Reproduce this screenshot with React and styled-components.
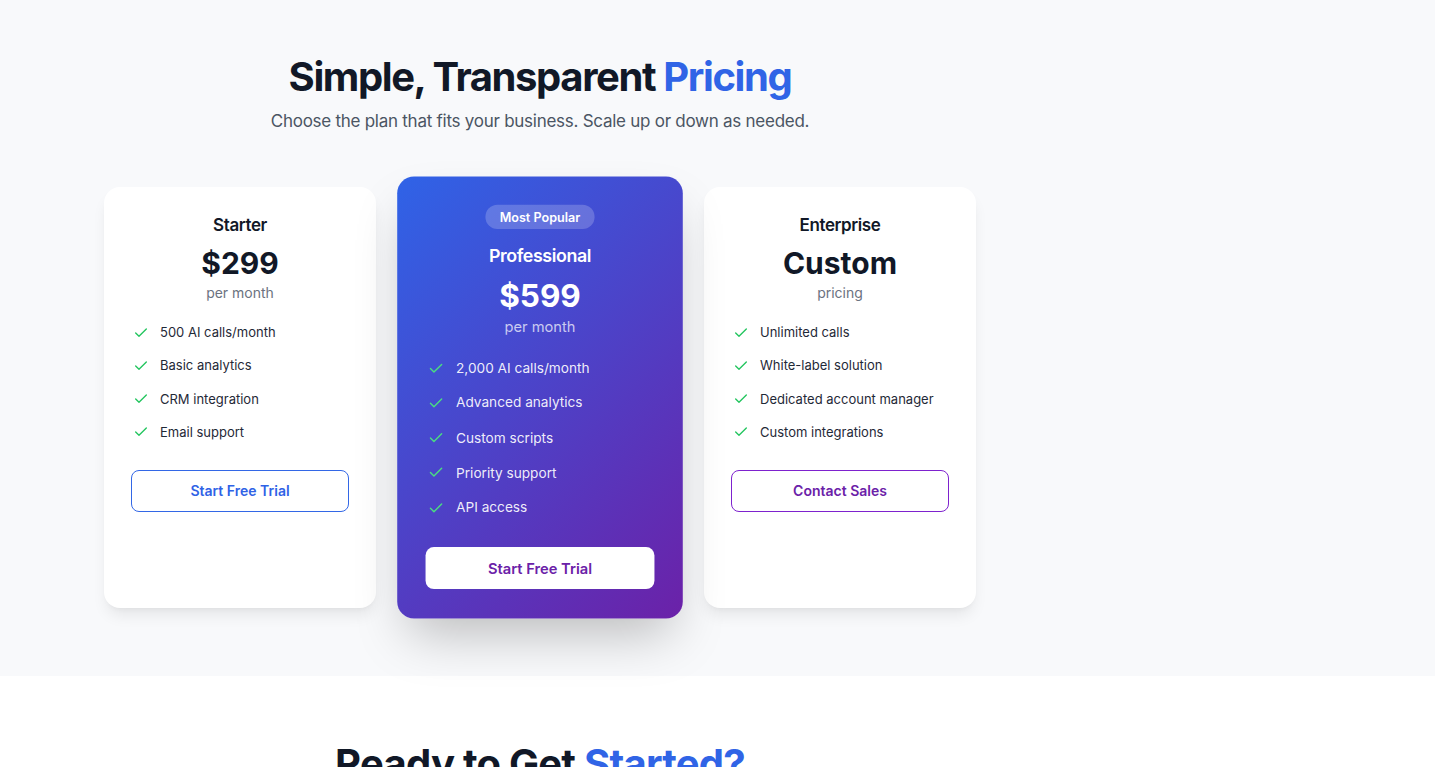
import React from "react";
import styled, { createGlobalStyle } from "styled-components";

const Global = createGlobalStyle`
  html, body { margin: 0; padding: 0; }
  body {
    font-family: Inter, "Noto Sans", "Liberation Sans", sans-serif;
    background: #ffffff;
    color: #111827;
    -webkit-font-smoothing: antialiased;
  }
  * { box-sizing: border-box; }
`;

const Page = styled.div`
  width: 100%;
`;

const PricingSection = styled.section`
  background: #f8f9fb;
  padding: 53px 0 68px;
`;

const Container = styled.div`
  width: 1080px;
  padding: 0 24px;
`;

const Header = styled.div`
  text-align: center;
  margin-bottom: 53px;
`;

const Title = styled.h2`
  margin: 0;
  font-size: 40px;
  line-height: 48px;
  font-weight: 700;
  letter-spacing: ${(p) => (p.$tight ? "-1.4px" : "-0.75px")};
  color: #111827;
`;

const Accent = styled.span`
  color: #3064e6;
`;

const Subtitle = styled.p`
  margin: 7px 0 0;
  font-size: 17px;
  line-height: 26px;
  letter-spacing: -0.26px;
  color: #4b5563;
`;

const Grid = styled.div`
  display: grid;
  grid-template-columns: repeat(3, 272px);
  column-gap: 28px;
  justify-content: center;
  align-items: stretch;
`;

const Card = styled.div`
  display: flex;
  flex-direction: column;
  align-items: center;
  padding: 24px 27px 28px;
  border-radius: 16px;
  background: ${(p) =>
    p.$featured ? "linear-gradient(135deg, #2f63e7 0%, #6b21a8 100%)" : "#ffffff"};
  color: ${(p) => (p.$featured ? "#ffffff" : "#111827")};
  box-shadow: ${(p) =>
    p.$featured
      ? "0 25px 50px -12px rgba(0,0,0,0.25)"
      : "0 10px 15px -3px rgba(0,0,0,0.08), 0 4px 6px -4px rgba(0,0,0,0.06)"};
  transform: ${(p) => (p.$featured ? "scale(1.05)" : "none")};
`;

const Badge = styled.span`
  display: inline-block;
  padding: 4px 14px;
  margin: 3px 0 11px;
  border-radius: 999px;
  background: rgba(255, 255, 255, 0.2);
  font-size: 12px;
  line-height: 15px;
  font-weight: 600;
  color: #ffffff;
`;

const PlanName = styled.h3`
  margin: 0 0 6px;
  font-size: 17px;
  line-height: 28px;
  font-weight: 600;
  letter-spacing: -0.4px;
`;

const Price = styled.div`
  font-size: 30px;
  line-height: 36px;
  font-weight: 700;
`;

const Period = styled.div`
  margin-top: 2px;
  font-size: 14px;
  line-height: 20px;
  color: ${(p) => (p.$featured ? "rgba(255,255,255,0.72)" : "#6b7280")};
`;

const Features = styled.ul`
  list-style: none;
  margin: 19px 0 0;
  padding: 0 0 0 2px;
  width: 100%;
  display: flex;
  flex-direction: column;
  gap: 12.33px;
`;

const Feature = styled.li`
  display: flex;
  align-items: center;
  gap: 11px;
  font-size: 13px;
  line-height: 21px;
  color: ${(p) => (p.$featured ? "rgba(255,255,255,0.92)" : "#1f2937")};
`;

const CheckIcon = styled.svg`
  flex: none;
  width: 16px;
  height: 16px;
  color: ${(p) => (p.$featured ? "#4ade80" : "#22c55e")};
`;

const Button = styled.button`
  margin-top: 27px;
  width: 100%;
  height: ${(p) => (p.$variant === "solid" ? "40px" : "42px")};
  border-radius: 8px;
  font-family: inherit;
  font-size: 14px;
  font-weight: 600;
  cursor: pointer;
  background: #ffffff;
  border: ${(p) =>
    p.$variant === "solid"
      ? "none"
      : `1px solid ${p.$variant === "purple" ? "#7e22ce" : "#3367e6"}`};
  color: ${(p) => (p.$variant === "blue" ? "#2f62e6" : "#6b21a8")};
`;

const NextSection = styled.section`
  background: #ffffff;
  padding: 64px 0 40px;
`;

const Check = ({ featured }) => (
  <CheckIcon
    $featured={featured}
    viewBox="0 0 24 24"
    fill="none"
    stroke="currentColor"
    strokeWidth="2"
    strokeLinecap="round"
    strokeLinejoin="round"
  >
    <path d="M20 6 9 17l-5-5" />
  </CheckIcon>
);

const plans = [
  {
    name: "Starter",
    price: "$299",
    period: "per month",
    features: ["500 AI calls/month", "Basic analytics", "CRM integration", "Email support"],
    cta: "Start Free Trial",
    variant: "blue",
  },
  {
    name: "Professional",
    price: "$599",
    period: "per month",
    featured: true,
    features: [
      "2,000 AI calls/month",
      "Advanced analytics",
      "Custom scripts",
      "Priority support",
      "API access",
    ],
    cta: "Start Free Trial",
    variant: "solid",
  },
  {
    name: "Enterprise",
    price: "Custom",
    period: "pricing",
    features: [
      "Unlimited calls",
      "White-label solution",
      "Dedicated account manager",
      "Custom integrations",
    ],
    cta: "Contact Sales",
    variant: "purple",
  },
];

export default function App() {
  return (
    <Page>
      <Global />
      <PricingSection>
        <Container>
          <Header>
            <Title $tight>
              Simple, Transparent <Accent>Pricing</Accent>
            </Title>
            <Subtitle>Choose the plan that fits your business. Scale up or down as needed.</Subtitle>
          </Header>
          <Grid>
            {plans.map((p) => (
              <Card key={p.name} $featured={p.featured}>
                {p.featured && <Badge>Most Popular</Badge>}
                <PlanName>{p.name}</PlanName>
                <Price>{p.price}</Price>
                <Period $featured={p.featured}>{p.period}</Period>
                <Features>
                  {p.features.map((f) => (
                    <Feature key={f} $featured={p.featured}>
                      <Check featured={p.featured} />
                      {f}
                    </Feature>
                  ))}
                </Features>
                <Button $variant={p.variant}>{p.cta}</Button>
              </Card>
            ))}
          </Grid>
        </Container>
      </PricingSection>
      <NextSection>
        <Container>
          <Header>
            <Title>
              Ready to Get <Accent>Started?</Accent>
            </Title>
          </Header>
        </Container>
      </NextSection>
    </Page>
  );
}
